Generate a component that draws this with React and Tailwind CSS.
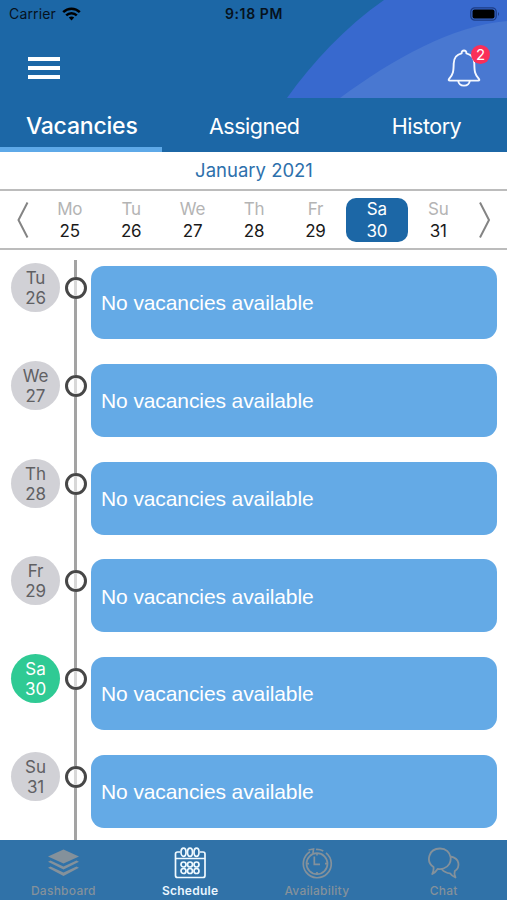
const weekDays = [
  ['Mo', 25],
  ['Tu', 26],
  ['We', 27],
  ['Th', 28],
  ['Fr', 29],
  ['Sa', 30],
  ['Su', 31],
];

function StatusBar() {
  return (
    <div className="relative grid h-7 grid-cols-3 items-center pl-[9px] pr-[6px] text-[#06121d]">
      <div className="flex items-center gap-[6px]">
        <span className="text-[14px] leading-none tracking-[0.15px]">Carrier</span>
        <svg width="19" height="14" viewBox="0 0 19 14" fill="none" stroke="#000" strokeWidth="2.5">
          <path d="M1.2 5.2C5.8.6 13.2.6 17.8 5.2" />
          <path d="M4.2 8.3c3-2.9 7.6-2.9 10.6 0" />
          <path d="M6.8 10.6c1.5-1.4 3.9-1.4 5.4 0L9.5 13.4Z" fill="#000" stroke="none" />
        </svg>
      </div>
      <span className="-ml-[2px] text-center text-[14px] font-semibold leading-none tracking-[0.600px]">9:18 PM</span>
      <svg className="justify-self-end" width="31" height="14" viewBox="0 0 31 14">
        <rect x=".8" y=".8" width="25.4" height="12.4" rx="4" fill="none" stroke="#1d3c85" strokeWidth="1.3" />
        <rect x="2.5" y="2.5" width="22" height="9" rx="2" fill="#000" />
        <path d="M28 5q2 2 0 4Z" fill="#1d3c85" />
      </svg>
    </div>
  );
}

function Header() {
  return (
    <header className="relative h-[98px] bg-[#1c67a6]">
      <svg className="absolute inset-0" width="507" height="98" viewBox="0 0 507 98">
        <path d="M287 98C312 63 345 27 384 0H507V98Z" fill="#3869ce" />
        <path d="M340 98C394 58 452 26 507 21V98Z" fill="#4978d1" />
      </svg>
      <StatusBar />
      <div className="relative flex justify-between pl-7 pr-4 pt-[16px]">
        <div className="flex w-8 flex-col gap-[5px] pt-[13px]">
          <span className="h-1 bg-white" />
          <span className="h-1 bg-white" />
          <span className="h-1 bg-white" />
        </div>
        <div className="relative h-[44px] w-[44px]">
          <svg className="absolute left-0 top-[5px]" width="34" height="38" viewBox="0 0 34 38" fill="none" stroke="#f4f8ff" strokeWidth="1.9" strokeLinejoin="round">
            <path d="M14.6 4.400C14.200 .600 19.800 .600 19.400 4.400C24.700 5.600 27.200 9.600 27.300 14.500C27.400 22 27.800 26 32 30Q33 31.600 31.200 31.600H2.800Q1 31.600 2 30C6.200 26 6.600 22 6.700 14.500C6.800 9.600 9.300 5.600 14.600 4.400Z" />
            <path d="M11.300 32C12 38.200 22 38.200 22.700 32" />
          </svg>
          <span className="absolute left-[24px] top-[1px] flex h-[19px] w-[19px] items-center justify-center rounded-full bg-[#fa2f59] text-[15px] leading-none text-white">2</span>
        </div>
      </div>
    </header>
  );
}

function Tabs() {
  return (
    <nav className="relative flex h-[54px] bg-[#1c67a6] text-[21.500px] tracking-[-0.480px] text-white">
      <div className="flex w-[161.500px] justify-center border-b-[5.500px] border-[#5ea9e8] pl-[2px] pt-[12px] text-[23px] font-medium leading-8 tracking-[-0.200px]">
        <span>Vacancies</span>
      </div>
      <div className="flex flex-1 justify-center pl-[1px] pt-3 leading-8">
        <span>Assigned</span>
      </div>
      <div className="flex w-[161px] justify-center pt-3 leading-8">
        <span>History</span>
      </div>
    </nav>
  );
}

function WeekStrip() {
  return (
    <div className="flex h-[61px] items-center border-y-2 border-[#bcbcbc] px-4">
      <svg width="23" height="38" viewBox="0 0 23 38" fill="none" stroke="#848484" strokeWidth="2">
        <path d="M11.500 1.500L2.500 19L11.500 36.500" />
      </svg>
      <div className="grid flex-1 grid-cols-7">
        {weekDays.map(([day, date]) => {
          const on = date === 30;
          return (
            <div
              key={date}
              className={`flex h-[44px] flex-col items-center rounded-[10px] text-[17px] leading-[22px] tracking-[-0.200px] ${on ? 'bg-[#1c67a6] text-white' : 'text-[#1a1a1a]'}`}
            >
              <span className={on ? 'text-white' : 'text-[#b4b4b4]'}>{day}</span>
              <span>{date}</span>
            </div>
          );
        })}
      </div>
      <svg width="22" height="38" viewBox="0 0 22 38" fill="none" stroke="#848484" strokeWidth="2">
        <path d="M11 1.500L20 19L11 36.500" />
      </svg>
    </div>
  );
}

function DayRow({ day, date }) {
  const on = date === 30;
  return (
    <div className="flex h-[97.750px] items-start pl-[11px] pr-[10px]">
      <div
        className={`mt-[3px] flex h-[49px] w-[49px] flex-col items-center justify-center rounded-full pt-[1px] text-[17px] leading-5 tracking-[-0.100px] ${on ? 'bg-[#2fca94] text-white' : 'bg-[#d1d1d6] text-[#606063]'}`}
      >
        <span>{day}</span>
        <span>{date}</span>
      </div>
      <div className="flex h-full w-[31px] flex-col items-center">
        <div className="h-[17px] w-[3.500px] bg-[#a3a3a3]" />
        <div className="flex h-[22px] w-[22px] shrink-0 justify-center rounded-full border-[3px] border-[#474747] bg-white">
          <div className="h-full w-[3px] bg-[#d8d8d8]" />
        </div>
        <div className="w-[3.500px] flex-1 bg-[#a3a3a3]" />
      </div>
      <div className="mt-[6px] flex h-[73px] flex-1 items-center rounded-[13px] bg-[#64aae6] pl-[10px] pt-[1px] font-['Liberation_Sans',Arial,sans-serif] text-[21px] tracking-[-0.100px] text-white">
        <span>No vacancies available</span>
      </div>
    </div>
  );
}

function LayersIcon() {
  return (
    <svg width="34" height="34" viewBox="0 0 34 34" fill="#84919b">
      <path d="M17.500 2.500L33 9.500L17.500 16.500L2 9.500Z" />
      <path d="M2 14.800L4.500 13.600L17.500 19.400L30.500 13.600L33 14.800L17.500 22.500Z" />
      <path d="M2 20.800L4.500 19.600L17.500 25.600L30.500 19.600L33 20.800L17.500 29Z" />
    </svg>
  );
}

function CalendarIcon() {
  const columns = [10.5, 17, 23.5];
  return (
    <svg width="34" height="34" viewBox="0 0 34 34" fill="none" stroke="#f0faff" strokeWidth="1.700">
      <path d="M7 5H4.500Q2.500 5 2.500 7V28.500Q2.500 30.500 4.500 30.500H30Q32 30.500 32 28.500V7Q32 5 30 5H27M2.500 11.500H32" />
      {columns.map((x) => (
        <g key={x}>
          <ellipse cx={x} cy="5.200" rx="2.500" ry="4.100" />
          <circle cx={x} cy="17.500" r="2.500" />
          <circle cx={x} cy="24" r="2.500" />
        </g>
      ))}
    </svg>
  );
}

function ClockIcon() {
  return (
    <svg width="34" height="34" viewBox="0 0 34 34" fill="none" stroke="#84919b" strokeWidth="1.700">
      <path d="M8.500 3L13.500 2L13 6M10 4.800A14 14 0 1 0 26 5.800M16 2.500A14 14 0 0 1 23.300 4" />
      <circle cx="17" cy="16.700" r="10.500" />
      <path d="M14.300 9.500V17.300H20M17 6V8.500M17 25V27.400M6.300 16.700H9M25 16.700H27.700" />
    </svg>
  );
}

function ChatIcon() {
  return (
    <svg width="34" height="34" viewBox="0 0 34 34" fill="none" stroke="#84919b" strokeWidth="1.800" strokeLinejoin="round">
      <path d="M6.500 20C-1.500 14.500 1.500 1.500 13 1.500C25.500 1.500 27.500 18 16.500 21.500Q13.500 22.400 10.800 21.800Q8.500 25.500 5.300 27Q7 23.500 6.500 20Z" />
      <path d="M23.500 9.500C33 11 33.500 20.500 27.800 24Q26.700 27 28.500 30.500Q24.800 29 23 26.300Q18 26 14.500 22" />
    </svg>
  );
}

const navItems = [
  ['Dashboard', LayersIcon],
  ['Schedule', CalendarIcon],
  ['Availability', ClockIcon],
  ['Chat', ChatIcon],
];

function BottomBar() {
  return (
    <footer className="grid h-[60px] grid-cols-4 bg-[#3072a8]">
      {navItems.map(([label, Icon]) => (
        <div
          key={label}
          className={`flex flex-col items-center pt-[7px] text-[12px] leading-4 tracking-[0.250px] ${label === 'Schedule' ? 'font-semibold text-[#eaf6ff]' : 'font-medium text-[#84919b]'}`}
        >
          <Icon />
          <span className="mt-[2px]">{label}</span>
        </div>
      ))}
    </footer>
  );
}

export default function App() {
  return (
    <div className="flex h-[900px] w-[507px] flex-col overflow-hidden bg-white font-[Inter,'Liberation_Sans',sans-serif]">
      <Header />
      <Tabs />
      <div className="flex h-[37px] items-center justify-center pl-px pt-px text-[18.500px] text-[#2d70ac]">
        <span>January 2021</span>
      </div>
      <WeekStrip />
      <main className="min-h-0 flex-1 overflow-hidden pt-[10px]">
        {weekDays.slice(1).map(([day, date]) => (
          <DayRow key={date} day={day} date={date} />
        ))}
      </main>
      <BottomBar />
    </div>
  );
}
